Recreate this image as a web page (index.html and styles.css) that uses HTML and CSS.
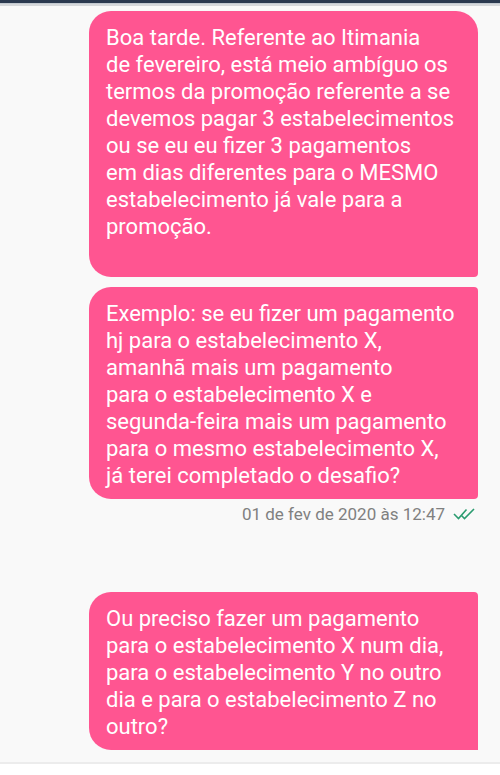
FILE: index.html
```html
<!DOCTYPE html>
<html lang="pt-BR">
<head>
<meta charset="utf-8">
<meta name="viewport" content="width=device-width, initial-scale=1">
<title>Conversa</title>
<link rel="stylesheet" href="styles.css">
</head>
<body>
<div class="topbar"></div>
<main class="chat">
  <section class="group">
    <p class="bubble bubble-first">Boa tarde. Referente ao Itimania<br>de fevereiro, está meio ambíguo os<br>termos da promoção referente a se<br>devemos pagar 3 estabelecimentos<br>ou se eu eu fizer 3 pagamentos<br>em dias diferentes para o MESMO<br>estabelecimento já vale para a<br>promoção.<br><br></p>
    <p class="bubble">Exemplo: se eu fizer um pagamento<br>hj para o estabelecimento X,<br>amanhã mais um pagamento<br>para o estabelecimento X e<br>segunda-feira mais um pagamento<br>para o mesmo estabelecimento X,<br>já terei completado o desafio?</p>
    <div class="meta">
      <time datetime="2020-02-01T12:47">01 de fev de 2020 às 12:47</time>
      <svg class="checks" viewBox="0 0 22 14" role="img" aria-label="Lida"><path d="M1 7l4.5 4.5L13.500 2.500M8.500 8.500l3 3L21 2"/></svg>
    </div>
  </section>
  <section class="group">
    <p class="bubble bubble-last">Ou preciso fazer um pagamento<br>para o estabelecimento X num dia,<br>para o estabelecimento Y no outro<br>dia e para o estabelecimento Z no<br>outro?</p>
  </section>
</main>
<footer class="bottom"></footer>
</body>
</html>
```
FILE: styles.css
```css
* {
  box-sizing: border-box;
}

body {
  margin: 0;
  min-height: 100vh;
  display: flex;
  flex-direction: column;
  background: #f9f9f9;
  font-family: Roboto, "Liberation Sans", sans-serif;
}

.topbar {
  height: 6px;
  border-top: 3px solid #2b394f;
  border-bottom: 2px solid #d6d8db;
  background: #c3c9d0;
}

.chat {
  display: flex;
  flex-direction: column;
  gap: 68px;
  padding: 5px 22px 12px 89px;
}

.group {
  display: flex;
  flex-direction: column;
  gap: 10px;
}

.bubble {
  margin: 0;
  padding: 13px 16px 10px 17px;
  border-radius: 22px 4px 4px 22px;
  background: #ff5591;
  color: #fff;
  font-size: 22px;
  line-height: 27px;
  white-space: nowrap;
}

.bubble-first {
  border-top-right-radius: 22px;
}

.bubble-last {
  border-bottom-right-radius: 0;
}

.meta {
  display: flex;
  align-items: center;
  justify-content: flex-end;
  gap: 8px;
  margin-top: -5px;
  padding-right: 3px;
  color: #808080;
  font-size: 17px;
  line-height: 20px;
}

.checks {
  width: 22px;
  height: 14px;
  fill: none;
  stroke: #2b9c70;
  stroke-width: 1.6;
}

.bottom {
  flex: 1;
  border-top: 2px solid #ececec;
  background: #fff;
}
```
